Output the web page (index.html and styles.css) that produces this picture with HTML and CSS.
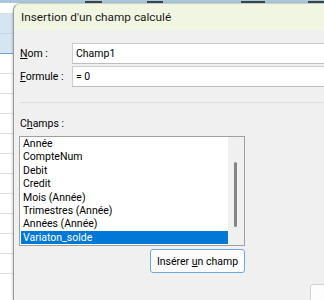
FILE: index.html
```html
<!DOCTYPE html>
<html lang="fr">
<head>
    <meta charset="UTF-8">
    <meta name="viewport" content="width=device-width, initial-scale=1.0">
    <title>Insertion d'un champ calculé</title>
    <link rel="stylesheet" href="styles.css">
</head>
<body>
    <!-- Entête de la feuille derrière la boîte de dialogue (bas des chiffres visibles) -->
    <div class="sheet-head">
        <span class="head-mark m1"></span>
        <span class="head-mark m2"></span>
        <span class="head-mark m3"></span>
        <span class="head-mark m4"></span>
    </div>

    <div class="desk">
        <!-- Colonne visible de la feuille -->
        <div class="sheet">
            <div class="sheet-row"></div>
            <div class="sheet-row sel"></div>
            <div class="sheet-row sel last-sel"></div>
            <div class="sheet-row"></div>
            <div class="sheet-row"></div>
            <div class="sheet-row"></div>
            <div class="sheet-row"></div>
            <div class="sheet-row"></div>
            <div class="sheet-row"></div>
            <div class="sheet-row"></div>
            <div class="sheet-row"></div>
            <div class="sheet-row"></div>
            <div class="sheet-row"></div>
            <div class="sheet-row"></div>
        </div>

        <!-- Boîte de dialogue -->
        <div class="dialog">
            <div class="titlebar">Insertion d'un champ calculé</div>

            <div class="dialog-body">
                <div class="field">
                    <label for="nom"><u>N</u>om :</label>
                    <input type="text" id="nom" value="Champ1">
                </div>
                <div class="field">
                    <label for="formule"><u>F</u>ormule :</label>
                    <input type="text" id="formule" value="= 0">
                </div>

                <div class="separator"></div>

                <div class="list-label">C<u>h</u>amps :</div>
                <div class="listbox">
                    <ul class="items">
                        <li>Année</li>
                        <li>CompteNum</li>
                        <li>Debit</li>
                        <li>Credit</li>
                        <li>Mois (Année)</li>
                        <li>Trimestres (Année)</li>
                        <li>Années (Année)</li>
                        <li class="selected">Variaton_solde</li>
                    </ul>
                    <div class="scrollbar"><div class="thumb"></div></div>
                </div>

                <div class="insert-row">
                    <button class="btn btn-focus">Insérer <u>u</u>n champ</button>
                </div>

                <div class="footer">
                    <button class="btn btn-ok"></button>
                </div>
            </div>
        </div>
    </div>
</body>
</html>
```

FILE: styles.css
```css
/* Général */
* {
    box-sizing: border-box;
}

body {
    margin: 0;
    width: 324px;
    height: 300px;
    overflow: hidden;
    background: #ffffff;
    font-family: Roboto, "Noto Sans", sans-serif;
    font-size: 10.5px;
    color: #000000;
}

/* Entête de la feuille */
.sheet-head {
    display: flex;
    align-items: flex-end;
    height: 3px;
    background: #a9c7da;
}

.head-mark {
    height: 2px;
    background: #3c4650;
}

.m1 { margin-left: 85px; width: 17px; }
.m2 { margin-left: 45px; width: 17px; }
.m3 { margin-left: 78px; width: 25px; }
.m4 { margin-left: 43px; width: 16px; }

.desk {
    display: flex;
    height: 297px;
}

/* Feuille derrière */
.sheet {
    width: 13px;
    flex-shrink: 0;
    background: #ffffff;
}

.sheet-row {
    height: 20px;
    border-bottom: 1px solid #dcdcdc;
}

.sheet-row:first-child {
    height: 11px;
}

.sheet-row.sel {
    background: #d3e6f2;
    border-bottom-color: #c2d6e3;
}

.sheet-row.last-sel {
    border-bottom: 1px solid #6fa7cc;
}

/* Boîte de dialogue */
.dialog {
    flex: 1;
    background: #f0f0f0;
    border-left: 1px solid #9a9a9a;
    border-top: 1px solid #c9d0c0;
    border-top-left-radius: 8px;
    overflow: hidden;
    box-shadow: -1px 0 2px rgba(0, 0, 0, 0.15);
}

.titlebar {
    height: 26px;
    padding-left: 7px;
    line-height: 26px;
    background: #f1f6e2;
    color: #1a1a1a;
    font-size: 11.8px;
    white-space: nowrap;
}

.dialog-body {
    padding: 13px 0 0 6px;
}

/* Champs du formulaire */
.field {
    display: flex;
    align-items: center;
    margin-bottom: 2px;
}

.field label {
    width: 52px;
    flex-shrink: 0;
    white-space: nowrap;
}

.field input {
    width: 300px;
    flex-shrink: 0;
    height: 21px;
    padding: 0 3px;
    border: 1px solid #cccccc;
    border-bottom-color: #bdbdbd;
    background: #ffffff;
    font-family: inherit;
    font-size: 10.5px;
    color: #000000;
    outline: none;
}

.separator {
    margin-top: 15px;
    height: 1px;
    background: #dcdcdc;
}

.list-label {
    margin-top: 13px;
    line-height: 16px;
}

/* Liste des champs */
.listbox {
    display: flex;
    width: 226px;
    height: 110px;
    margin-top: 4px;
    margin-left: -1px;
    border: 1px solid #a0a0a0;
    background: #ffffff;
}

.items {
    flex: 1;
    list-style: none;
    margin: 0;
    padding: 0 0 0 1px;
}

.items li {
    height: 13.4px;
    line-height: 13.4px;
    padding-left: 2px;
    white-space: nowrap;
}

.items li.selected {
    background: #0078d7;
    color: #ffffff;
}

.scrollbar {
    width: 16px;
    flex-shrink: 0;
    background: #f0f0f0;
    padding: 25px 0 0 6px;
}

.thumb {
    width: 3px;
    height: 65px;
    border-radius: 2px;
    background: #858585;
}

/* Boutons */
.insert-row {
    display: flex;
    justify-content: flex-end;
    width: 225px;
    margin-top: 3px;
}

.btn {
    height: 24px;
    padding: 0 4px;
    background: #fdfdfd;
    border: 1px solid #d0d0d0;
    border-radius: 3px;
    font-family: inherit;
    font-size: 10.5px;
    color: #000000;
    white-space: nowrap;
}

.btn-focus {
    width: 95px;
    border-color: #6aa9e3;
}

.footer {
    display: flex;
    margin-top: 11px;
    padding-left: 290px;
}

.btn-ok {
    width: 80px;
    flex-shrink: 0;
}
```
